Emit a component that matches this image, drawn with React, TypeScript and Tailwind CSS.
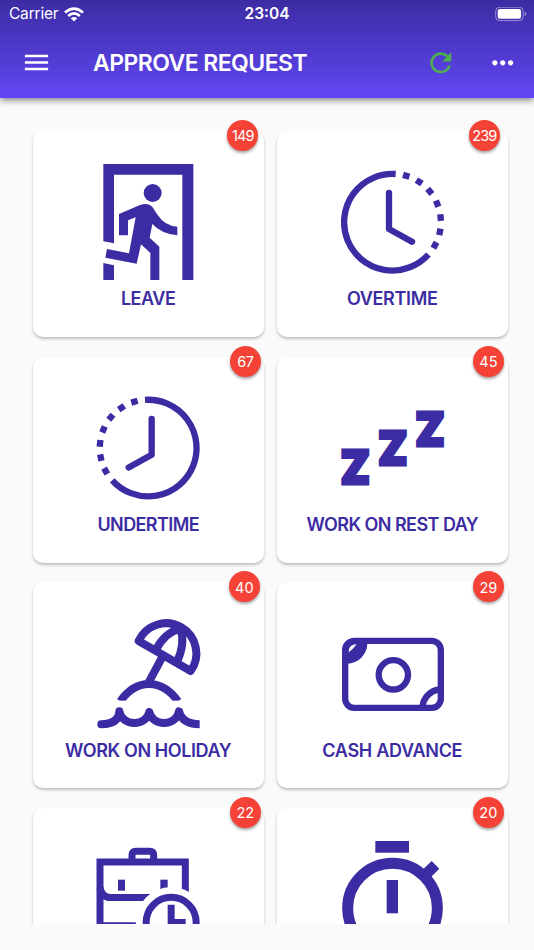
import React from 'react'
import { MdMenu, MdMoreHoriz, MdRefresh } from 'react-icons/md'

interface RequestCardProps {
  label?: string
  count: number
  icon: React.ReactNode
  labelClass?: string
  badgeClass?: string
}

interface IconFrameProps {
  viewBox: string
  children: React.ReactNode
}

const IconFrame: React.FC<IconFrameProps> = ({ viewBox, children }) => (
  <svg viewBox={viewBox} className="h-[120px] w-[120px] shrink-0 overflow-visible" fill="currentColor">
    {children}
  </svg>
)

const LeaveIcon = () => (
  <IconFrame viewBox="189 141 360 360">
    <path d="M235 147H505V495H472V179H267V385L235 379Z" />
    <path d="M235 444L267 451V495H235Z" />
    <circle cx="383" cy="234" r="27" />
    <path d="M282 297L345 270Q371 261 384 278Q391 290 398 300Q420 333 457 335V361Q408 356 382 327L374 368L403 395V495H376V414L348 388L335 446L241 428L246 402L312 415L332 307L309 316V361H282Z" />
  </IconFrame>
)

const dotAngles = [16.5, 33.5, 50.5, 67.5, 84.5, 101.5, 118.5]

const ClockFace = () => (
  <>
    <g fill="none" stroke="currentColor" strokeWidth="19">
      <path d="M377 177A145 145 0 1 0 475.3 418.5" />
      <path d="M357 234V342L426 380" strokeLinecap="round" strokeLinejoin="round" />
    </g>
    {dotAngles.map((angle) => (
      <rect key={angle} x="357.5" y="167" width="20" height="19" transform={`rotate(${angle} 367.5 321.5)`} />
    ))}
  </>
)

const OvertimeIcon = () => (
  <IconFrame viewBox="186 141 360 360">
    <ClockFace />
  </IconFrame>
)

const UndertimeIcon = () => (
  <IconFrame viewBox="189 144 360 360">
    <g transform="translate(737 2.5) scale(-1 1)">
      <ClockFace />
    </g>
  </IconFrame>
)

const RestDayIcon = () => (
  <IconFrame viewBox="186 144 360 360">
    <g
      fontFamily="Inter, sans-serif"
      fontWeight="900"
      fontSize="140"
      stroke="currentColor"
      strokeWidth="9"
      textAnchor="middle"
    >
      <text transform="translate(256 431) scale(0.91 1)">Z</text>
      <text transform="translate(368 375) scale(0.91 1)">Z</text>
      <text transform="translate(480 318) scale(0.91 1)">Z</text>
    </g>
  </IconFrame>
)

const HolidayIcon = () => (
  <IconFrame viewBox="189 134 360 360">
    <g fill="none" stroke="currentColor" strokeWidth="24" strokeLinejoin="round">
      <path d="M341 218A90.5 90.5 0 1 1 497 308Z" />
      <path d="M394 242Q420 192 468 180" />
      <path d="M456 280Q482 225 466 180" />
      <path d="M412 266L371 342" />
      <path d="M286 399Q322 347 372 347Q422 347 459 399" />
      <path d="M229 468Q282 466 283 429C291 475 364 475 373 431C381 475 454 475 462 429" strokeLinecap="round" />
      <path d="M462 429Q472 468 524 468" />
    </g>
    {/* trims the slanted ends of the island above the water */}
    <rect x="268" y="397" width="40" height="14" className="fill-white" />
    <rect x="436" y="397" width="40" height="14" className="fill-white" />
  </IconFrame>
)

const CashIcon = () => (
  <IconFrame viewBox="186 134 360 360">
    <g fill="none" stroke="currentColor" strokeWidth="19">
      <rect x="225.5" y="217.5" width="287" height="201" rx="27" />
      <circle cx="370" cy="319.5" r="44" />
      <path d="M510 363.5A57 57 0 0 0 457.5 415" />
    </g>
    <path d="M235 286A62 62 0 0 0 292 227L250 218L226 240Z" />
    <path d="M236 252Q236 228 260 228Q250 242 236 252Z" className="fill-white" />
  </IconFrame>
)

const BriefcaseClockIcon = () => (
  <IconFrame viewBox="189 147 360 360">
    <g fill="none" stroke="currentColor" strokeWidth="21">
      <path d="M225 216H481V407H225Z" />
      <path d="M321 208V196Q321 184 333 184H374Q386 184 386 196V208" />
      <path d="M225 292Q230 322.5 257 322.5H380" />
    </g>
    <rect x="279" y="269" width="21" height="33" />
    <rect x="406" y="269" width="22" height="33" />
    <circle cx="438.5" cy="397" r="106" className="fill-white" />
    <g fill="none" stroke="currentColor" strokeWidth="21">
      <circle cx="438.5" cy="397" r="75" />
      <path d="M438.5 344V397.5H482" />
    </g>
  </IconFrame>
)

const StopwatchIcon = () => (
  <IconFrame viewBox="186 147 360 360">
    <rect x="316" y="153" width="101" height="35" />
    <rect x="350" y="270" width="34" height="100" />
    <circle cx="367.5" cy="354.5" r="134.5" fill="none" stroke="currentColor" strokeWidth="33" />
    <path d="M485 213L508 236L481 263L457 240Z" />
  </IconFrame>
)

const RequestCard: React.FC<RequestCardProps> = ({
  label,
  count,
  icon,
  labelClass = '',
  badgeClass = 'right-[4px]'
}) => (
  <div className="relative flex h-[206px] flex-col items-center rounded-[10px] bg-white pt-[31px] text-[#3c2ca3] shadow-[0_2px_3px_rgba(0,0,0,0.24)]">
    {icon}
    {label && (
      <span className={`mt-[5px] text-[18px] leading-6 font-[560] whitespace-nowrap ${labelClass}`}>{label}</span>
    )}
    <span
      className={`absolute -top-[11px] flex h-[31px] w-[31px] items-center justify-center rounded-full bg-[#f44336] pt-px text-[14.5px] text-white shadow-[0_2px_3px_rgba(0,0,0,0.35)] ${badgeClass}`}
    >
      {count}
    </span>
  </div>
)

const requests: RequestCardProps[] = [
  { label: 'LEAVE', count: 149, icon: <LeaveIcon />, labelClass: 'tracking-[-0.45px]', badgeClass: 'right-[5.5px] tracking-[-0.9px]' },
  { label: 'OVERTIME', count: 239, icon: <OvertimeIcon />, labelClass: 'tracking-[-0.35px]', badgeClass: 'right-[8px] tracking-[-0.9px]' },
  { label: 'UNDERTIME', count: 67, icon: <UndertimeIcon />, labelClass: 'tracking-[-0.6px]', badgeClass: 'right-[3px] tracking-[-0.5px]' },
  { label: 'WORK ON REST DAY', count: 45, icon: <RestDayIcon />, labelClass: 'tracking-[-0.55px]' },
  { label: 'WORK ON HOLIDAY', count: 40, icon: <HolidayIcon />, labelClass: 'pt-px tracking-[-0.4px]' },
  { label: 'CASH ADVANCE', count: 29, icon: <CashIcon />, labelClass: 'pt-px tracking-[-0.3px]' },
  { count: 22, icon: <BriefcaseClockIcon />, badgeClass: 'right-[3px]' },
  { count: 20, icon: <StopwatchIcon /> }
]

const StatusBar = () => (
  <div className="flex h-7 items-center justify-between px-[9px]">
    <div className="flex w-24 items-center gap-[6px]">
      <span className="text-[15.5px] tracking-[-0.2px]">Carrier</span>
      <svg viewBox="0 0 20 15" className="h-[15px] w-5" fill="none" stroke="currentColor" strokeWidth="2.7">
        <path d="M1 5.6Q10 -2.4 19 5.6" />
        <path d="M4.2 9Q10 3.9 15.8 9" />
        <path d="M10 14.6L6.7 11.3Q10 8.6 13.3 11.3Z" fill="currentColor" stroke="none" />
      </svg>
    </div>
    <span className="text-[15.5px] font-semibold">23:04</span>
    <div className="flex w-24 justify-end">
      <svg viewBox="0 0 32 15" className="-mr-[2px] h-[15px] w-8">
        <rect x="0.7" y="0.2" width="27.5" height="13.4" rx="4" fill="none" stroke="white" strokeOpacity="0.45" />
        <rect x="2.7" y="2.1" width="23.4" height="9.6" rx="2.3" fill="white" />
        <path d="M29.7 4.7Q31.4 5.3 31.4 6.9Q31.4 8.5 29.7 9.1Z" fill="white" fillOpacity="0.45" />
      </svg>
    </div>
  </div>
)

export default function App() {
  return (
    <div className="flex h-[950px] w-[534px] flex-col overflow-hidden bg-[#fafafa] font-['Inter',sans-serif]">
      <header className="z-10 h-[98px] shrink-0 bg-linear-to-b from-[#3c2ca3] to-[#6147f5] text-white shadow-[0_2px_7px_rgba(0,0,0,0.5)]">
        <StatusBar />
        <div className="flex h-[69px] items-center pr-[16px] pl-[21px]">
          <MdMenu size={31} />
          <h1 className="ml-[41px] pt-[2px] text-[23px] font-semibold tracking-[-0.55px] whitespace-nowrap">
            APPROVE REQUEST
          </h1>
          <MdRefresh size={31.5} className="ml-auto text-[#4caf50]" />
          <MdMoreHoriz size={31.5} className="ml-[30px]" />
        </div>
      </header>
      <main className="h-[826px] shrink-0 overflow-hidden pt-[33px] pl-[32.6px]">
        <div className="grid grid-cols-[231.2px_231.2px] gap-x-[12.9px] gap-y-[19.7px]">
          {requests.map((request) => (
            <RequestCard key={request.count} {...request} />
          ))}
        </div>
      </main>
    </div>
  )
}
